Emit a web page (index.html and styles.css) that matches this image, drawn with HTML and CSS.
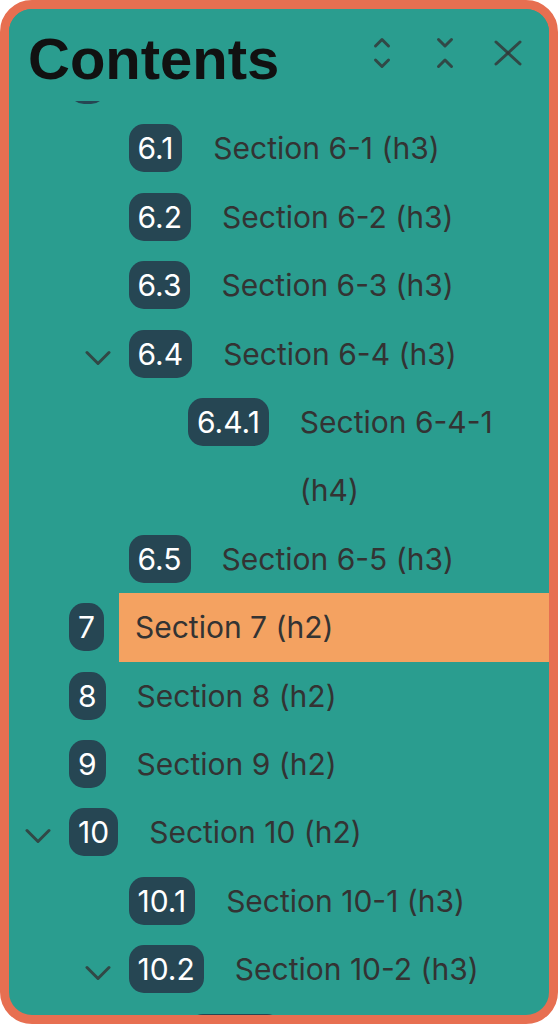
FILE: index.html
```html
<!DOCTYPE html>
<html lang="en">
<head>
  <meta charset="UTF-8" />
  <meta name="viewport" content="width=device-width, initial-scale=1.0" />
  <title>Contents</title>
  <link rel="stylesheet" href="styles.css">
</head>
<body>

<div class="panel">
  <div class="panel-head">
    <h1 class="title">Contents</h1>
    <div class="tools">
      <button class="tool" title="Expand all">
        <svg width="20" height="34" viewBox="0 0 20 34"><polyline points="3.5,10 10,3.5 16.5,10" /><polyline points="3.5,24 10,30.5 16.5,24" /></svg>
      </button>
      <button class="tool" title="Collapse all">
        <svg width="20" height="34" viewBox="0 0 20 34"><polyline points="3.5,3.5 10,10 16.5,3.5" /><polyline points="3.5,30.5 10,24 16.5,30.5" /></svg>
      </button>
      <button class="tool" title="Close">
        <svg width="30" height="28" viewBox="0 0 30 28"><line x1="3" y1="3" x2="27" y2="25" /><line x1="27" y1="3" x2="3" y2="25" /></svg>
      </button>
    </div>
  </div>

  <div class="toc-scroll">
    <ul class="toc">
      <li>
        <div class="row">
          <span class="toggle"><svg width="26" height="17" viewBox="0 0 26 17"><polyline points="2,2.5 13,13.5 24,2.5" /></svg></span>
          <span class="num">6</span>
          <a class="label" href="#s6">Section 6 (h2)</a>
        </div>
        <ul>
          <li><div class="row"><span class="toggle"></span><span class="num">6.1</span><a class="label" href="#s6-1">Section 6-1 (h3)</a></div></li>
          <li><div class="row"><span class="toggle"></span><span class="num">6.2</span><a class="label" href="#s6-2">Section 6-2 (h3)</a></div></li>
          <li><div class="row"><span class="toggle"></span><span class="num">6.3</span><a class="label" href="#s6-3">Section 6-3 (h3)</a></div></li>
          <li>
            <div class="row">
              <span class="toggle"><svg width="26" height="17" viewBox="0 0 26 17"><polyline points="2,2.5 13,13.5 24,2.5" /></svg></span>
              <span class="num">6.4</span>
              <a class="label" href="#s6-4">Section 6-4 (h3)</a>
            </div>
            <ul>
              <li><div class="row"><span class="toggle"></span><span class="num">6.4.1</span><a class="label" href="#s6-4-1">Section 6-4-1 (h4)</a></div></li>
            </ul>
          </li>
          <li><div class="row"><span class="toggle"></span><span class="num">6.5</span><a class="label" href="#s6-5">Section 6-5 (h3)</a></div></li>
        </ul>
      </li>
      <li><div class="row"><span class="toggle"></span><span class="num">7</span><a class="label active" href="#s7">Section 7 (h2)</a></div></li>
      <li><div class="row"><span class="toggle"></span><span class="num">8</span><a class="label" href="#s8">Section 8 (h2)</a></div></li>
      <li><div class="row"><span class="toggle"></span><span class="num">9</span><a class="label" href="#s9">Section 9 (h2)</a></div></li>
      <li>
        <div class="row">
          <span class="toggle"><svg width="26" height="17" viewBox="0 0 26 17"><polyline points="2,2.5 13,13.5 24,2.5" /></svg></span>
          <span class="num">10</span>
          <a class="label" href="#s10">Section 10 (h2)</a>
        </div>
        <ul>
          <li><div class="row"><span class="toggle"></span><span class="num">10.1</span><a class="label" href="#s10-1">Section 10-1 (h3)</a></div></li>
          <li>
            <div class="row">
              <span class="toggle"><svg width="26" height="17" viewBox="0 0 26 17"><polyline points="2,2.5 13,13.5 24,2.5" /></svg></span>
              <span class="num">10.2</span>
              <a class="label" href="#s10-2">Section 10-2 (h3)</a>
            </div>
            <ul>
              <li><div class="row"><span class="toggle"></span><span class="num">10.2.1</span><a class="label" href="#s10-2-1">Section 10-2-1 (h4)</a></div></li>
            </ul>
          </li>
        </ul>
      </li>
    </ul>
  </div>
</div>

</body>
</html>
```

FILE: styles.css
```css
body {
  margin: 0; padding: 0;
  background: #fff;
  font-family: Inter, "Liberation Sans", sans-serif;
}
.panel {
  height: 100vh; box-sizing: border-box;
  border: 9px solid #e76f51; border-radius: 32px;
  background: #2a9d8f;
  display: flex; flex-direction: column;
  overflow: hidden;
}

/* header */
.panel-head {
  height: 92px; flex-shrink: 0; box-sizing: border-box;
  padding: 21px 10px 0 19px;
  display: flex; align-items: flex-start;
  background: #2a9d8f;
  position: relative; z-index: 1;
}
.title {
  flex: 1; margin: 0;
  font-family: "Liberation Sans", Arial, sans-serif;
  font-size: 58px; line-height: 1; font-weight: bold; color: #111;
}
.tools { display: flex; margin-top: 6px; }
.tool {
  width: 63px; height: 34px; padding: 0;
  background: none; border: none; cursor: pointer;
  display: flex; align-items: center; justify-content: center;
}
.tool svg, .toggle svg {
  fill: none; stroke: rgba(51,51,51,0.8); stroke-width: 3;
  stroke-linecap: round; stroke-linejoin: round;
}

/* list */
.toc-scroll { flex: 1; overflow: hidden; }
.toc, .toc ul { list-style: none; margin: 0; padding: 0; }
.toc { padding-left: 16px; margin-top: -55px; }
.toc ul { padding-left: 59.5px; }
.row { display: flex; align-items: flex-start; }
.toggle { width: 26px; height: 17px; margin: 30px 18px 0 0; flex-shrink: 0; }
.toggle svg { display: block; }
.num {
  margin-top: 10px; flex-shrink: 0;
  height: 48px; line-height: 48px; padding: 0 9px;
  background: #264653; color: #fff; border-radius: 15px;
  font-size: 30px;
}
.label {
  flex: 1; min-width: 0;
  margin-left: 15px; padding: 0 16px;
  font-size: 30px; line-height: 68.4px; color: #333;
  text-decoration: none;
}
.label.active { background: #f4a261; }
```
